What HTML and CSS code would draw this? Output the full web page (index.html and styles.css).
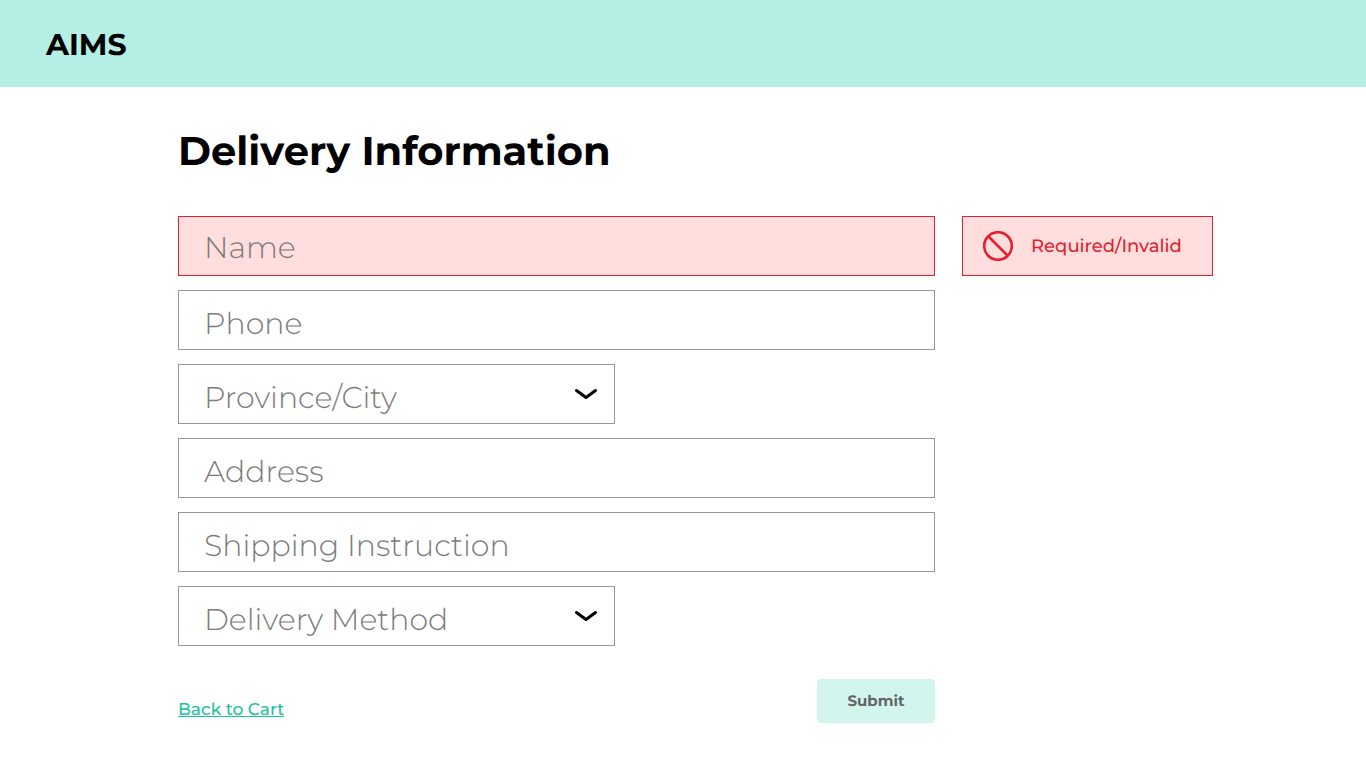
FILE: index.html
```html
<!DOCTYPE html>
<html lang="en">
<head>
<meta charset="utf-8">
<title>AIMS – Delivery Information</title>
<meta name="viewport" content="width=device-width, initial-scale=1">
<link rel="stylesheet" href="styles.css">
</head>
<body>
<header class="site-header"><a class="brand" href="#">AIMS</a></header>
<main class="page">
  <h1 class="title">Delivery Information</h1>
  <form class="form" novalidate>
    <div class="row">
      <input class="field field-invalid" type="text" placeholder="Name" aria-label="Name" aria-invalid="true" aria-describedby="name-error">
      <p class="error" id="name-error">
        <svg class="error-icon" viewBox="0 0 30 30" aria-hidden="true"><circle cx="15" cy="15" r="13.8"/><path d="M5.5 5.5l19 19"/></svg>
        Required/Invalid
      </p>
    </div>
    <input class="field" type="tel" placeholder="Phone" aria-label="Phone">
    <div class="select">
      <select class="field" aria-label="Province/City"><option>Province/City</option></select>
      <svg class="chevron" viewBox="0 0 24 12" aria-hidden="true"><path d="M2.5 2.5l9.5 7 9.5-7"/></svg>
    </div>
    <input class="field" type="text" placeholder="Address" aria-label="Address">
    <input class="field" type="text" placeholder="Shipping Instruction" aria-label="Shipping Instruction">
    <div class="select">
      <select class="field" aria-label="Delivery Method"><option>Delivery Method</option></select>
      <svg class="chevron" viewBox="0 0 24 12" aria-hidden="true"><path d="M2.5 2.5l9.5 7 9.5-7"/></svg>
    </div>
    <div class="actions">
      <a class="back" href="#">Back to Cart</a>
      <button class="submit" type="submit">Submit</button>
    </div>
  </form>
</main>
</body>
</html>
```
FILE: styles.css
```css
* { box-sizing: border-box; }
body { margin: 0; background: #fff; color: #000; font-family: Montserrat, "Open Sans", sans-serif; text-rendering: geometricPrecision; }
.site-header { display: flex; align-items: center; padding: 25px 46px 22px; background: #b4eee4; }
.brand { color: #000; font: 700 30px/40px Montserrat, Inter, sans-serif; text-decoration: none; }
.page { padding: 41px 153px 40px 178px; }
.title { margin: 0 0 40px; font: 700 40px/48px Montserrat, "Open Sans", sans-serif; }
.form { display: grid; grid-template-columns: minmax(0, 757fr) 27px minmax(0, 251fr); row-gap: 14px; }
.form > * { grid-column: 1; }
.form > .row { grid-column: 1 / -1; display: grid; grid-template-columns: subgrid; }
.field { width: 100%; height: 60px; padding: 6px 25px 0; border: 1px solid #979797; border-radius: 0; background: #fff; color: #7c7c7c; font: 300 30px/40px Montserrat, "Open Sans", sans-serif; text-rendering: inherit; }
.field::placeholder { color: #7c7c7c; opacity: 1; }
.field-invalid { padding-top: 2px; border-color: #e5202e; background: #ffdedd; }
.error { grid-column: 3; display: flex; align-items: center; gap: 18px; margin: 0; padding: 0 20px; border: 1px solid #e5202e; background: #ffdedd; color: #e5202e; font: 500 18px/24px Montserrat, Inter, sans-serif; white-space: nowrap; }
.error-icon { flex: none; width: 30px; height: 30px; fill: none; stroke: #e5202e; stroke-width: 2.6; }
.select { position: relative; width: 437px; max-width: 100%; }
.select .field { appearance: none; padding-top: 8px; }
.chevron { position: absolute; right: 17px; top: 24px; width: 24px; height: 12px; fill: none; stroke: #000; stroke-width: 3; stroke-linecap: round; stroke-linejoin: round; pointer-events: none; }
.actions { display: flex; justify-content: space-between; align-items: flex-end; padding-top: 19px; }
.back { color: #1cc3a2; font: 500 17px/26px Montserrat, Inter, sans-serif; text-decoration-thickness: 1px; }
.submit { width: 118px; height: 44px; padding: 0; border: 0; border-radius: 4px; background: #d2f5ee; color: #666; font: 700 15px/24px Montserrat, Inter, sans-serif; text-rendering: inherit; }
```
